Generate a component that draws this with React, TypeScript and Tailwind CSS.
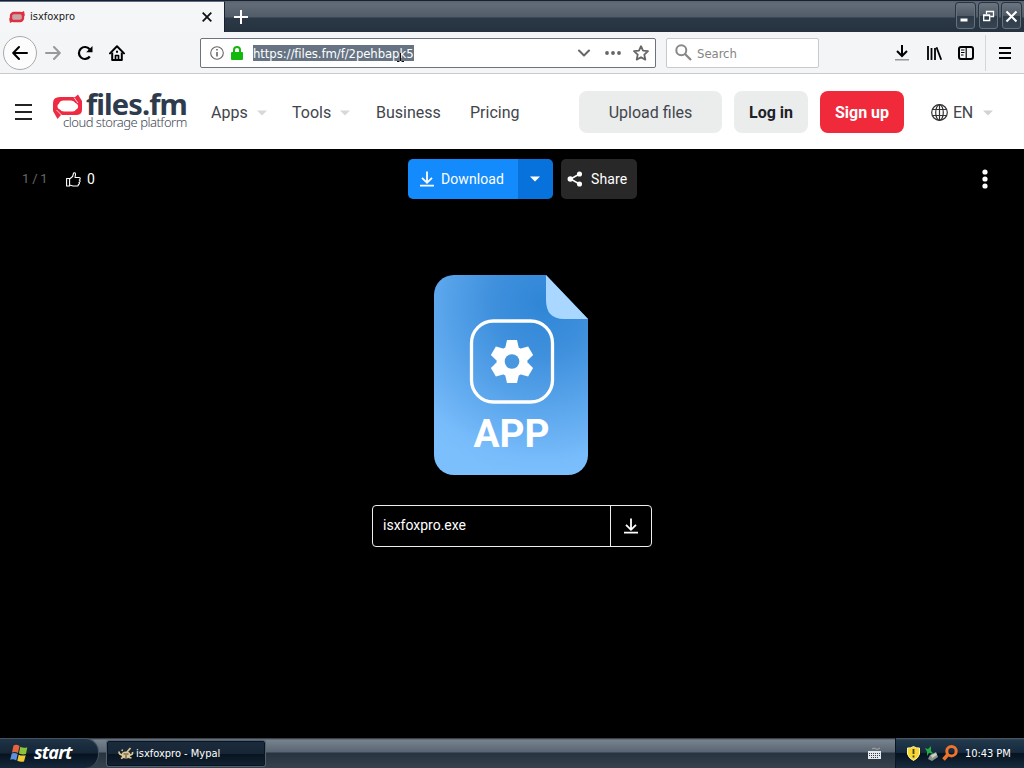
import React from 'react';

const Caret: React.FC<{ className?: string }> = ({ className }) => (
    <svg className={className} width="10" height="6" viewBox="0 0 10 6" fill="currentColor">
        <path d="M0 0.5h10L5 5.5z" />
    </svg>
);

const DownloadIcon: React.FC<{ className?: string }> = ({ className }) => (
    <svg className={className} width="16" height="16" viewBox="0 0 16 16" fill="none" stroke="currentColor" strokeWidth="1.8">
        <path d="M8 0.5v11M3 6.8l5 5 5-5M1 14.7h14" />
    </svg>
);

const TabBar = () => (
    <div className="flex h-8 shrink-0 border-t border-[#17202c] bg-[linear-gradient(180deg,#58636f_0,#626c78_3px,#515c68_16px,#2b3845_17px,#26323f_31px)]">
        <div className="flex w-[225px] items-center border-t border-r border-t-[#5c6d84] border-r-[#17202c] bg-[#f5f6f7] pl-[9px]">
            <svg width="16" height="12" viewBox="0 0 16 12">
                <rect x="2" y="2" width="12" height="8" rx="3" fill="#c9a5a8" stroke="#dc3140" strokeWidth="2.4" />
                <path d="M0 7l1 5 4-2zM16 5l-1-5-4 2z" fill="#dc3140" />
            </svg>
            <span className="ml-[5px] w-[172px] pt-px font-['DejaVu_Sans_Condensed','DejaVu_Sans',sans-serif] text-[11px] text-[#181818]">isxfoxpro</span>
            <svg width="10" height="10" viewBox="0 0 10 10" stroke="#111" strokeWidth="1.8">
                <path d="M0.7 0.7l8.6 8.6M9.3 0.7L0.7 9.3" />
            </svg>
        </div>
        <div className="flex w-8 items-center justify-center">
            <svg width="14" height="14" viewBox="0 0 14 14" stroke="#fff" strokeWidth="2">
                <path d="M7 0v14M0 7h14" />
            </svg>
        </div>
        <div className="ml-auto flex gap-1 pt-0.5 pr-[3px]">
            {['min', 'max', 'close'].map((kind) => (
                <div key={kind} className="flex h-[26px] w-[19px] items-center justify-center rounded-[3px] border border-[#66717e] bg-[linear-gradient(180deg,#69747f,#4d5864_50%,#2e3b49_52%,#364351)] shadow-[0_0_0_1px_#283440]">
                    <svg width="13" height="13" viewBox="0 0 13 13" fill="none" stroke="#fff">
                        {kind === 'min' && <path d="M1.5 10h7" strokeWidth="3" />}
                        {kind === 'max' && <path d="M1.7 5.5h6v5h-6zM1 5h7M4.5 4V1.5h7v5h-3" strokeWidth="1.3" />}
                        {kind === 'close' && <path d="M1.5 1.5l10 10M11.5 1.5l-10 10" strokeWidth="2.1" />}
                    </svg>
                </div>
            ))}
        </div>
    </div>
);

const Toolbar = () => (
    <div className="flex h-[42px] shrink-0 items-center border-b border-[#c9cacc] bg-[#f4f5f7] pl-[3px] text-black">
        <div className="flex size-[34px] items-center justify-center rounded-full border border-[#aaa] bg-[#fcfcfc]">
            <svg width="16" height="16" viewBox="0 0 16 16" fill="none" stroke="currentColor" strokeWidth="2" strokeLinecap="round" strokeLinejoin="round">
                <path d="M15 8H1.5M7 2L1.2 8 7 14" />
            </svg>
        </div>
        <svg className="ml-2 text-[#999]" width="16" height="16" viewBox="0 0 16 16" fill="none" stroke="currentColor" strokeWidth="2" strokeLinecap="round" strokeLinejoin="round">
            <path d="M1 8h13.5M9 2l5.8 6L9 14" />
        </svg>
        <svg className="ml-4" width="16" height="16" viewBox="0 0 16 16" fill="none" stroke="currentColor" strokeWidth="2.2">
            <path d="M12.8 11.5A6 6 0 1 1 12.6 4.2" />
            <path d="M15.5 1v6.3H9.2z" fill="currentColor" stroke="none" />
        </svg>
        <svg className="ml-4" width="16" height="16" viewBox="0 0 16 16" fill="none" stroke="currentColor" strokeWidth="2" strokeLinejoin="round">
            <path d="M1 8.4L8 1.3l7 7.1" strokeLinecap="round" />
            <path d="M3.2 7.5V15h9.6V7.5" />
            <path d="M6.5 15v-4.5h3V15" strokeWidth="1.7" />
            <path d="M7 6.8h2" />
        </svg>

        {/* Address bar */}
        <div className="ml-[75px] flex h-[30px] w-[456px] items-center rounded-[2px] border border-[#6c737e] bg-white pl-[9px]">
            <svg width="14" height="14" viewBox="0 0 14 14" fill="none" stroke="#666">
                <circle cx="7" cy="7" r="6.3" strokeWidth="1.1" />
                <path d="M7 6v4.5M7 3v1.6" strokeWidth="1.6" />
            </svg>
            <svg className="ml-[7px]" width="12" height="14" viewBox="0 0 12 14" fill="none">
                <path d="M3 7V4a3 3 0 0 1 6 0v3" stroke="#12b80b" strokeWidth="2" />
                <rect y="6" width="12" height="8" rx="1" fill="#12b80b" />
            </svg>
            <div className="relative ml-[10px] h-4 w-[161px] bg-[#657383] font-['DejaVu_Sans_Condensed','DejaVu_Sans',sans-serif] text-[13px] leading-[17px] tracking-[-0.08px] whitespace-nowrap text-white">
                https://files.fm/f/2pehbapk5
                {/* Text cursor */}
                <svg className="absolute top-0 left-[143px]" width="9" height="18" viewBox="0 0 9 18" fill="none" stroke="#111">
                    <path d="M4.5 8v8M1 16.5h2.5M5.5 16.5H8" />
                </svg>
            </div>
            <svg className="ml-[164px]" width="12" height="8" viewBox="0 0 12 8" fill="none" stroke="#666" strokeWidth="2" strokeLinecap="round" strokeLinejoin="round">
                <path d="M1 1.5l5 5 5-5" />
            </svg>
            <svg className="ml-[15px]" width="16" height="4" viewBox="0 0 16 4" fill="#666">
                <circle cx="2" cy="2" r="1.9" />
                <circle cx="8" cy="2" r="1.9" />
                <circle cx="14" cy="2" r="1.9" />
            </svg>
            <svg className="ml-3" width="16" height="16" viewBox="0 0 16 16" fill="none" stroke="#666" strokeWidth="1.8" strokeLinejoin="round">
                <path d="M8 1.2l2 4.5 5 .5-3.7 3.4 1 5L8 12.2l-4.3 2.4 1-5L1 6.2l5-.5z" />
            </svg>
        </div>

        <div className="ml-[10px] flex h-[30px] w-[153px] items-center rounded-[2px] border border-[#c9cacc] bg-white pl-2">
            <svg width="17" height="17" viewBox="0 0 17 17" fill="none" stroke="#888" strokeWidth="2">
                <circle cx="6.3" cy="6.3" r="5" />
                <path d="M10 10l6 6" strokeWidth="2.3" />
            </svg>
            <span className="ml-[5px] pt-0.5 font-['DejaVu_Sans_Condensed','DejaVu_Sans',sans-serif] text-[13px] tracking-[-0.05px] text-[#858585]">Search</span>
        </div>

        <svg className="ml-[75px]" width="16" height="16" viewBox="0 0 16 16" fill="none" stroke="currentColor" strokeWidth="2">
            <path d="M8 0v11M3 6l5 5 5-5" />
            <path d="M1 14.8h14" stroke="#888" strokeWidth="1.3" />
        </svg>
        <svg className="ml-4" width="16" height="16" viewBox="0 0 16 16" fill="none" stroke="currentColor" strokeWidth="1.8">
            <path d="M2 1v14M5.5 3v12M9 3v12M10.5 2.2l4.7 12.5" />
        </svg>
        <svg className="ml-4" width="16" height="16" viewBox="0 0 16 16" fill="none" stroke="currentColor" strokeWidth="2">
            <rect x="1" y="2" width="14" height="12" rx="2" />
            <path d="M8.2 2v12M3 5h3.5M3 7.5h3.5M3 10h2.5" strokeWidth="1.2" />
        </svg>
        <div className="ml-[11px] h-9 w-px bg-[#d5d6d8]" />
        <svg className="ml-[13px]" width="12" height="13" viewBox="0 0 12 13" stroke="currentColor" strokeWidth="2">
            <path d="M0 2h12M0 7h12M0 12h12" />
        </svg>
    </div>
);

const Logo = () => (
    <div className="flex h-10 w-[134px] items-start">
        <svg className="mt-0.5 shrink-0" width="30" height="25" viewBox="0 0 30 25">
            {/* Rounded frame made of two arrows */}
            <path
                fillRule="evenodd"
                fill="#ee2b42"
                d="M7 3H22L25 0.500 29 7V16Q29 21 23 21H8L4.500 25 0 17V9Q0 3 7 3zM10.500 6.500Q7 6.500 6 9.500 4 10.500 4.500 13 5 15 7 15.500 8.500 18 12 17.500H18.500Q22 18 23 15.500 25.500 14.500 25 11.500 24.500 9.500 22.500 9 21 6.500 18 6.500z"
            />
            <path d="M21 3.500l4 5.500M3.500 16l5 5" stroke="#fff" strokeWidth="0.8" />
        </svg>
        <div className="flex flex-col">
            <span className="ml-[3px] h-[22px] font-['Noto_Sans','Open_Sans',sans-serif] text-[29px] leading-[24px] font-bold tracking-[-0.9px] whitespace-nowrap text-[#2d3b4d]">files.fm</span>
            <span className="-ml-5 h-4 font-['Noto_Sans','Open_Sans',sans-serif] text-[13px] leading-4 font-light tracking-[-0.5px] whitespace-nowrap text-[#3f4956]">cloud storage platform</span>
        </div>
    </div>
);

const SiteHeader = () => (
    <header className="flex h-[75px] shrink-0 items-center bg-white pl-[15px] font-[Roboto,sans-serif] text-[16px] text-[#41454b]">
        <svg width="17" height="16" viewBox="0 0 17 16" stroke="#222" strokeWidth="2">
            <path d="M0 1h17M0 8h17M0 15h17" />
        </svg>
        <div className="ml-[21px]">
            <Logo />
        </div>
        <nav className="ml-6 flex w-[368px] items-center pt-0.5">
            <span className="w-[46px]">Apps</span>
            <Caret className="text-[#d8d8d8]" />
            <span className="ml-[25px] w-12">Tools</span>
            <Caret className="text-[#d8d8d8]" />
            <span className="ml-[26px] w-[94px]">Business</span>
            <span>Pricing</span>
        </nav>
        <div className="flex gap-3">
            <button className="h-[42px] w-[143px] rounded-lg bg-[#ebecec] pt-0.5">Upload files</button>
            <button className="h-[42px] w-[74px] rounded-lg bg-[#ebecec] pt-0.5 font-bold text-[#1d2129]">Log in</button>
            <button className="h-[42px] w-[84px] rounded-lg bg-[#f0293b] pt-0.5 font-bold text-white">Sign up</button>
        </div>
        <svg className="mt-px ml-[27px]" width="17" height="17" viewBox="0 0 17 17" fill="none" stroke="#333" strokeWidth="1.2">
            <circle cx="8.5" cy="8.5" r="7.8" />
            <ellipse cx="8.5" cy="8.5" rx="3.8" ry="7.8" />
            <path d="M8.5 0.7v15.6M1.5 5.5h14M1.5 11.5h14" />
        </svg>
        <span className="ml-[5px] w-[30px] pt-0.5 tracking-[-0.3px]">EN</span>
        <Caret className="mt-0.5 text-[#d3d3d3]" />
    </header>
);

const FileIcon = () => (
    <svg width="154" height="200" viewBox="0 0 154 200">
        <defs>
            <radialGradient id="sheet" gradientUnits="userSpaceOnUse" cx="110" cy="28" r="175">
                <stop offset="0" stopColor="#2f86d6" />
                <stop offset="0.3" stopColor="#3f90dd" />
                <stop offset="0.65" stopColor="#5fa9ee" />
                <stop offset="0.9" stopColor="#78bcfb" />
                <stop offset="1" stopColor="#7bbffd" />
            </radialGradient>
        </defs>
        <path d="M20 0h92l42 44v136a20 20 0 0 1-20 20H20a20 20 0 0 1-20-20V20A20 20 0 0 1 20 0z" fill="url(#sheet)" />
        <path d="M112 0l42 44h-24q-18 0-18-19z" fill="#a9d7ff" />
        <rect x="37.5" y="46" width="81" height="81" rx="22" fill="none" stroke="#fff" strokeWidth="3.3" />
        {/* Gear */}
        <g transform="translate(78 86.5)" fill="#fff">
            {[0, 60, 120].map((angle) => (
                <path key={angle} d="M-6.5-15L-5-21.5H5L6.5-15V15L5 21.5H-5L-6.5 15z" transform={`rotate(${angle})`} />
            ))}
            <circle r="15.5" />
            <circle r="7.3" fill="#4997df" />
        </g>
        <text x="77.5" y="172" textAnchor="middle" textLength="76" lengthAdjust="spacingAndGlyphs" fill="#fff" fontFamily="Roboto, sans-serif" fontWeight="700" fontSize="39">APP</text>
    </svg>
);

const Viewer = () => (
    <main className="flex h-[589px] shrink-0 flex-col bg-black font-[Roboto,sans-serif] text-[14px] text-white">
        <div className="flex h-[60px] shrink-0 items-center pl-[22px]">
            <span className="w-11 text-[13px] tracking-[-0.2px] text-[#686868]">1 / 1</span>
            <svg width="15" height="15" viewBox="0 0 15 15" fill="none" stroke="#fff" strokeWidth="1.1" strokeLinejoin="round">
                <path d="M0.6 6.5h3v7.5h-3zM3.6 7l3-2.5 1-3.5q2-.8 1.9 1.5L9 5.5h4q1.4.2 1.2 1.3-.1 1-.9 1.2 1 .5.7 1.5-.3.8-1 .9.7.7.3 1.4-.3.7-1 .8.3 1.2-1.3 1.4H7L3.6 13" />
            </svg>
            <span className="ml-[6px] w-[321px]">0</span>
            <button className="flex h-10 w-[110px] items-center rounded-l-[5px] bg-[#148bfc] pl-[11px]">
                <DownloadIcon />
                <span className="ml-[6px] tracking-[0.08px]">Download</span>
            </button>
            <button className="flex h-10 w-[35px] items-center justify-center rounded-r-[5px] bg-[#0872dc] pr-0.5">
                <Caret />
            </button>
            <button className="ml-2 flex h-10 w-[76px] items-center rounded-[5px] bg-[#282828] pl-[6px]">
                <svg width="16" height="16" viewBox="0 0 16 16" fill="#fff" stroke="#fff" strokeWidth="1.5">
                    <path d="M12.5 3L3.5 8l9 5" fill="none" />
                    <circle cx="12.5" cy="3" r="1.8" />
                    <circle cx="3.3" cy="8" r="2" />
                    <circle cx="12.5" cy="13" r="1.8" />
                </svg>
                <span className="ml-2 tracking-[0.1px]">Share</span>
            </button>
            <svg className="ml-[345px]" width="6" height="20" viewBox="0 0 6 20" fill="#fff">
                <circle cx="3" cy="3" r="2.6" />
                <circle cx="3" cy="10" r="2.6" />
                <circle cx="3" cy="17" r="2.6" />
            </svg>
        </div>
        <div className="mt-[66px] ml-[434px]">
            <FileIcon />
        </div>
        <div className="mt-[30px] ml-[372px] flex h-[42px] w-[280px] rounded-[4px] border border-[#eee]">
            <span className="flex w-[238px] items-center border-r border-[#eee] pb-[2px] pl-[10px]">isxfoxpro.exe</span>
            <span className="flex flex-1 items-center justify-center">
                <DownloadIcon />
            </span>
        </div>
    </main>
);

const Taskbar = () => (
    <footer className="flex h-[30px] shrink-0 items-center bg-[linear-gradient(180deg,#252d36_0,#78838f_2px,#596572_14px,#27333f_15px,#35414d_29px)] font-['DejaVu_Sans_Condensed','DejaVu_Sans',sans-serif] text-[11px] text-white">
        <div className="flex h-full w-[99px] items-center rounded-r-[14px] border-t border-r border-[#435363] bg-[linear-gradient(180deg,#1f3447,#142536_48%,#06121f_52%,#15283b)] pl-[10px]">
            <svg width="19" height="19" viewBox="0 0 19 19">
                <path d="M3.5 1.500q3-1.500 6 .5L8 9Q5 7.500 2 8.500z" fill="#e7633e" />
                <path d="M10.300 2.700q3.500 2 7 .5L16 10q-3 1-7-.5z" fill="#8cc33d" />
                <path d="M1.700 9.500q3-1 6 .5l-1.500 6.500q-3-2-6-.8z" fill="#5d91e0" />
                <path d="M8.700 10.700q3.500 1.500 7 .5L14 17.500q-3.500 1-6.700-.7z" fill="#f0ca35" />
            </svg>
            <span className="ml-[5px] pb-[3px] font-['Open_Sans','Noto_Sans',sans-serif] text-[18px] font-bold tracking-[-0.8px] italic">start</span>
        </div>
        <div className="ml-2 flex h-[25px] w-[158px] items-center rounded-[2px] border border-[#091521] bg-[linear-gradient(180deg,#1c2b3b,#172637_50%,#07131f_52%,#122131)] pl-[10px] shadow-[0_0_0_1px_#53606d]">
            <svg width="16" height="14" viewBox="0 0 16 14" fill="none">
                <ellipse cx="8" cy="9" rx="4.5" ry="3.5" fill="#d8c6a0" />
                <path d="M5 9Q1 9 1 5.5M5 4.5L3.5 4M9 6l3.500-4M12 9q3 0 2.500-3M5 11.500l-2 1M11 11.500l2.500.5" stroke="#dfc88b" strokeWidth="1.7" />
                <path d="M5.5 8h5M8 9v3" stroke="#584421" />
            </svg>
            <span className="ml-[2px] pt-0.5">isxfoxpro - Mypal</span>
        </div>
        <svg className="ml-[603px] shrink-0" width="13" height="12" viewBox="0 0 13 12">
            <path d="M4 2q2-2 4 0 2 1 4-1" fill="none" stroke="#aaa" />
            <rect y="4" width="13" height="8" fill="#e5e8ea" />
            <path d="M1 6.500h11M1 8.500h11M3 10.500h7" stroke="#35404b" strokeDasharray="1 1" />
        </svg>
        <div className="ml-auto flex h-full w-[129px] items-center border-l border-[#0a1622] bg-[linear-gradient(180deg,#52606b_0,#22384b_2px,#152a3e_48%,#06121f_52%,#172b3e)] pl-[11px]">
            <svg width="13" height="15" viewBox="0 0 13 15">
                <path d="M6.5 0.5q3 2 6 1.500v6q-1 4-6 6.500-5-2.500-6-6.500V2q3 .5 6-1.500z" fill="#f7d732" stroke="#fff4a5" />
                <path d="M6.5 3v5M6.500 9.500v2" stroke="#48401a" strokeWidth="1.8" />
            </svg>
            <svg className="ml-[5px]" width="13" height="15" viewBox="0 0 13 15">
                <path d="M5 9l6-3 2 5-6 4-4-2z" fill="#89938c" />
                <path d="M6 9l5-2 1 2-5 3z" fill="#c9d1c9" />
                <path d="M0 2l3 1 3-3v5l3 3-5-1-2 3 0-4z" fill="#25a943" />
            </svg>
            <svg className="ml-1" width="16" height="16" viewBox="0 0 16 16" fill="none" stroke="#ef732c">
                <circle cx="9.5" cy="6.2" r="4.7" strokeWidth="3" />
                <path d="M6 9.500l-4.500 5" strokeWidth="3.5" />
            </svg>
            <span className="ml-[7px] pt-0.5 tracking-[-0.05px] whitespace-nowrap">10:43 PM</span>
        </div>
    </footer>
);

export default function App() {
    return (
        <div className="flex h-[768px] w-[1024px] flex-col overflow-hidden bg-black">
            <TabBar />
            <Toolbar />
            <SiteHeader />
            <Viewer />
            <Taskbar />
        </div>
    );
}
